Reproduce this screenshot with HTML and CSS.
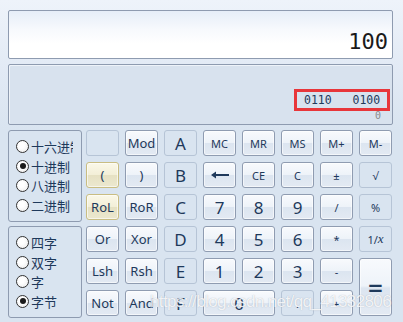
FILE: index.html
```html
<!DOCTYPE html>
<html lang="zh-CN">
<head>
  <meta charset="UTF-8">
  <title>计算器 - 程序员</title>
  <link rel="stylesheet" href="styles.css">
</head>
<body>
  <div class="calc">
    <div class="display">100</div>
    <div class="memo">
      <span class="bits">0110&nbsp;&nbsp;&nbsp;0100</span>
      <span class="bit-index">0</span>
    </div>

    <div class="keys">
      <div class="side">
        <div class="group">
          <label class="radio"><span class="dot"></span><span class="text">十六进制</span></label>
          <label class="radio"><span class="dot on"></span><span class="text">十进制</span></label>
          <label class="radio"><span class="dot"></span><span class="text">八进制</span></label>
          <label class="radio"><span class="dot"></span><span class="text">二进制</span></label>
        </div>
        <div class="group">
          <label class="radio"><span class="dot"></span><span class="text">四字</span></label>
          <label class="radio"><span class="dot"></span><span class="text">双字</span></label>
          <label class="radio"><span class="dot"></span><span class="text">字</span></label>
          <label class="radio"><span class="dot on"></span><span class="text">字节</span></label>
        </div>
      </div>

      <div class="pad">
        <!-- row 1 -->
        <div class="key off"></div>
        <div class="key sm">Mod</div>
        <div class="key off big">A</div>
        <div class="key xs">MC</div>
        <div class="key xs">MR</div>
        <div class="key xs">MS</div>
        <div class="key xs">M+</div>
        <div class="key xs">M-</div>
        <!-- row 2 -->
        <div class="key warm sm">(</div>
        <div class="key sm">)</div>
        <div class="key off big">B</div>
        <div class="key">
          <svg width="20" height="8" viewBox="0 0 20 8"><path d="M1 4 L6 0.5 L6 3 L19 3 L19 5 L6 5 L6 7.5 Z" fill="#1e395b"/></svg>
        </div>
        <div class="key xs">CE</div>
        <div class="key xs">C</div>
        <div class="key xs">±</div>
        <div class="key off xs">√</div>
        <!-- row 3 -->
        <div class="key warm sm">RoL</div>
        <div class="key sm">RoR</div>
        <div class="key off big">C</div>
        <div class="key big">7</div>
        <div class="key big">8</div>
        <div class="key big">9</div>
        <div class="key xs">/</div>
        <div class="key off xs">%</div>
        <!-- row 4 -->
        <div class="key sm">Or</div>
        <div class="key sm">Xor</div>
        <div class="key off big">D</div>
        <div class="key big">4</div>
        <div class="key big">5</div>
        <div class="key big">6</div>
        <div class="key xs">*</div>
        <div class="key off xs">1/<i>x</i></div>
        <!-- row 5 -->
        <div class="key sm">Lsh</div>
        <div class="key sm">Rsh</div>
        <div class="key off big">E</div>
        <div class="key big">1</div>
        <div class="key big">2</div>
        <div class="key big">3</div>
        <div class="key xs">-</div>
        <div class="key equals">=</div>
        <!-- row 6 -->
        <div class="key sm">Not</div>
        <div class="key sm">And</div>
        <div class="key off big">F</div>
        <div class="key big zero">0</div>
        <div class="key off xs">.</div>
        <div class="key xs">+</div>
      </div>
    </div>
  </div>

  <div class="watermark">https://blog.csdn.net/qq_41332806</div>
</body>
</html>
```

FILE: styles.css
```css
body {
  margin: 0;
  width: 403px;
  height: 322px;
  overflow: hidden;
  position: relative;
  background: linear-gradient(to bottom, #eef3fa 0px, #e2eaf5 70px, #d9e4f0 130px, #d9e4f0 100%);
  font-family: "Noto Sans", "Open Sans", sans-serif;
  color: #1e395b;
}
.calc {
  padding: 10px 0 0 8px;
}
.display {
  box-sizing: border-box;
  width: 385px;
  height: 49px;
  border: 1px solid #8e9bb0;
  border-radius: 2px;
  background: linear-gradient(to bottom, #e6eef8 0%, #f7f9fd 40%, #ffffff 70%);
  font-family: "DejaVu Sans Mono", monospace;
  font-size: 22px;
  line-height: 22px;
  color: #1a1a1a;
  text-align: right;
  padding: 20px 4px 0 0;
}
.memo {
  box-sizing: border-box;
  width: 385px;
  height: 61px;
  margin-top: 5px;
  border: 1px solid #8e9bb0;
  border-radius: 2px;
  background: #d8e2ee;
  box-shadow: inset 1px 1px 0 #eef3f9;
  display: flex;
  flex-direction: column;
  align-items: flex-end;
  justify-content: flex-end;
  padding: 0 2px 4px 0;
}
.bits {
  box-sizing: border-box;
  height: 22px;
  width: 96px;
  border: 3px solid #e8363a;
  padding: 0 0 0 7px;
  font-family: "DejaVu Sans Mono", monospace;
  font-size: 11.5px;
  line-height: 16px;
  color: #1e395b;
  white-space: nowrap;
}
.bit-index {
  font-family: "DejaVu Sans Mono", monospace;
  font-size: 10px;
  line-height: 9px;
  color: #8a8a8a;
  margin-right: 9px;
}
.keys {
  display: flex;
  gap: 4px;
  margin-top: 5px;
}
.side {
  display: flex;
  flex-direction: column;
  gap: 4px;
  width: 74px;
}
.group {
  box-sizing: border-box;
  height: 92px;
  border: 1px solid #8e9bb0;
  border-radius: 3px;
  padding: 6px 0 0 7px;
}
.radio {
  display: flex;
  align-items: center;
  height: 19.5px;
}
.dot {
  box-sizing: border-box;
  width: 13px;
  height: 13px;
  border: 1px solid #333;
  border-radius: 50%;
  background: radial-gradient(circle at 40% 40%, #ffffff 30%, #e8e8e8 100%);
  flex: none;
  position: relative;
}
.dot.on::after {
  content: "";
  position: absolute;
  left: 2.5px;
  top: 2.5px;
  width: 6px;
  height: 6px;
  border-radius: 50%;
  background: #1a1a1a;
}
.text {
  margin-left: 2px;
  max-width: 42px;
  overflow: hidden;
  white-space: nowrap;
  font-family: "Noto Sans CJK SC", sans-serif;
  font-size: 13px;
  color: #1e395b;
}
.pad {
  display: grid;
  grid-template-columns: repeat(8, 33px);
  grid-template-rows: repeat(6, 26px);
  gap: 6px;
}
.key {
  box-sizing: border-box;
  border: 1px solid #8f9cb1;
  border-radius: 3px;
  background: linear-gradient(to bottom, #f8fafd 0%, #eef3f9 48%, #dce5f0 52%, #e3eaf3 100%);
  box-shadow: inset 0 0 0 1px rgba(255, 255, 255, 0.6);
  display: flex;
  align-items: center;
  justify-content: center;
  font-size: 12px;
  color: #1e395b;
}
.key.xs {
  font-size: 11px;
}
.key.sm {
  font-size: 13px;
}
.key.big {
  font-size: 17px;
}
.key.off {
  background: transparent;
  border-color: #b6c4d6;
  box-shadow: none;
}
.key.warm {
  border-color: #c9bd82;
  background: linear-gradient(to bottom, #fbf8e8 0%, #f3efd8 48%, #e6e1c3 52%, #ece8cf 100%);
}
.key i {
  font-family: "Liberation Serif", serif;
  font-size: 13px;
}
.key.equals {
  grid-row: span 2;
  font-size: 26px;
  font-weight: 600;
}
.key.zero {
  grid-column: span 2;
}
.watermark {
  position: absolute;
  left: 150px;
  top: 292px;
  font-family: "Liberation Sans", Arial, sans-serif;
  font-size: 17px;
  letter-spacing: -0.6px;
  color: rgba(255, 255, 255, 0.85);
  text-shadow: 0 0 1px rgba(110, 120, 140, 0.5);
  white-space: nowrap;
}
```
